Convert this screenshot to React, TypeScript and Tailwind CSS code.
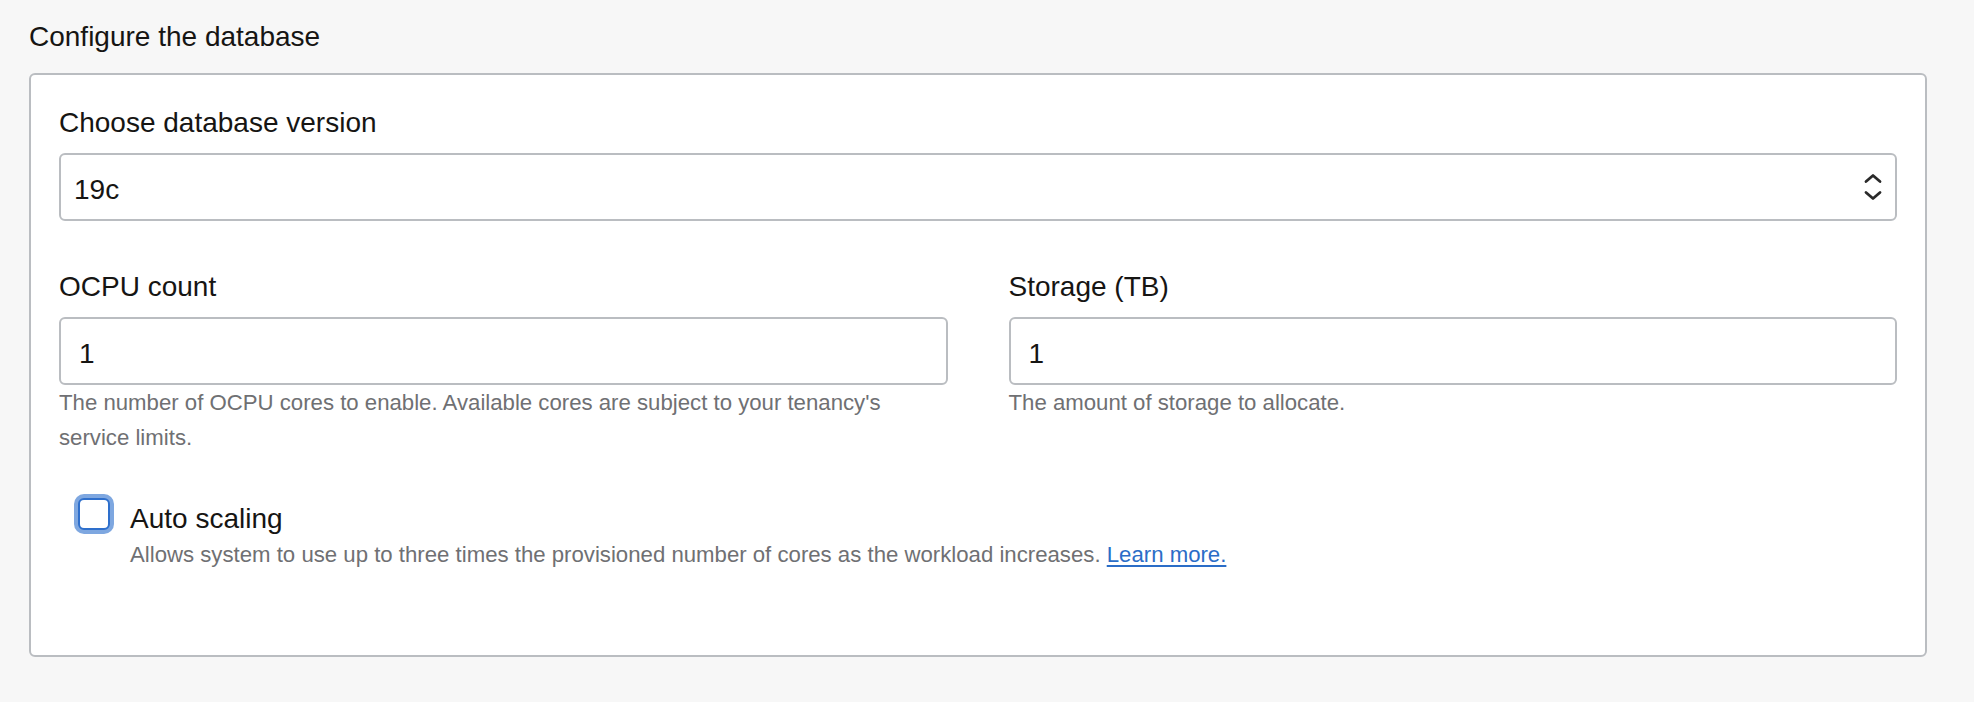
import React from "react";

function Chevrons() {
  return (
    <svg width="18" height="28" viewBox="0 0 18 28" fill="none" stroke="#2a2a2a" strokeWidth="2.8" strokeLinecap="round" strokeLinejoin="round">
      <polyline points="2,8.5 9,2.5 16,8.5" />
      <polyline points="2,19.5 9,25.5 16,19.5" />
    </svg>
  );
}

export default function App() {
  return (
    <div className="min-h-[702px] w-full bg-[#f7f7f7] pt-[17px] pl-[29px] pr-[47px] pb-[46px] text-[#161513] [font-family:'Liberation_Sans',Arial,sans-serif]">
      <h2 className="text-[28px] leading-[40px] font-normal">Configure the database</h2>
      <div className="mt-[16px] rounded-[6px] border-2 border-[#babdc1] bg-white px-[28px] pt-[28px] pb-[83px]">
        <label className="block text-[28px] leading-[40px]">Choose database version</label>
        <div className="mt-[10px] flex h-[68px] items-center justify-between rounded-[6px] border-2 border-[#babdc1] bg-white pl-[13px] pr-[13px]">
          <span className="pt-[5px] text-[28px] leading-[40px]">19c</span>
          <Chevrons />
        </div>

        <div className="mt-[46px] grid grid-cols-2 gap-x-[61px]">
          <div>
            <label className="block text-[28px] leading-[40px]">OCPU count</label>
            <div className="mt-[10px] flex h-[68px] items-center rounded-[6px] border-2 border-[#babdc1] bg-white pl-[18px]">
              <span className="pt-[5px] text-[28px] leading-[40px]">1</span>
            </div>
            <p className="text-[22.2px] leading-[35px] text-[#6f7073]">
              The number of OCPU cores to enable. Available cores are subject to your tenancy's service limits.
            </p>
          </div>
          <div>
            <label className="block text-[28px] leading-[40px]">Storage (TB)</label>
            <div className="mt-[10px] flex h-[68px] items-center rounded-[6px] border-2 border-[#babdc1] bg-white pl-[18px]">
              <span className="pt-[5px] text-[28px] leading-[40px]">1</span>
            </div>
            <p className="text-[22.2px] leading-[35px] text-[#6f7073]">The amount of storage to allocate.</p>
          </div>
        </div>

        <div className="mt-[44px] flex gap-[20px] pl-[19px]">
          <div className="mt-[-1px] h-[32px] w-[32px] shrink-0 rounded-[6px] border-[2.5px] border-[#2e6fcc] bg-white shadow-[0_0_0_4px_#7ea7e0]" />
          <div>
            <div className="text-[28px] leading-[40px]">Auto scaling</div>
            <div className="mt-[-1px] text-[22.2px] leading-[34px] text-[#6f7073]">
              Allows system to use up to three times the provisioned number of cores as the workload increases.{" "}
              <a href="#" className="text-[#2b6dc7] underline decoration-[2px] underline-offset-[3px]">Learn more.</a>
            </div>
          </div>
        </div>
      </div>
    </div>
  );
}
